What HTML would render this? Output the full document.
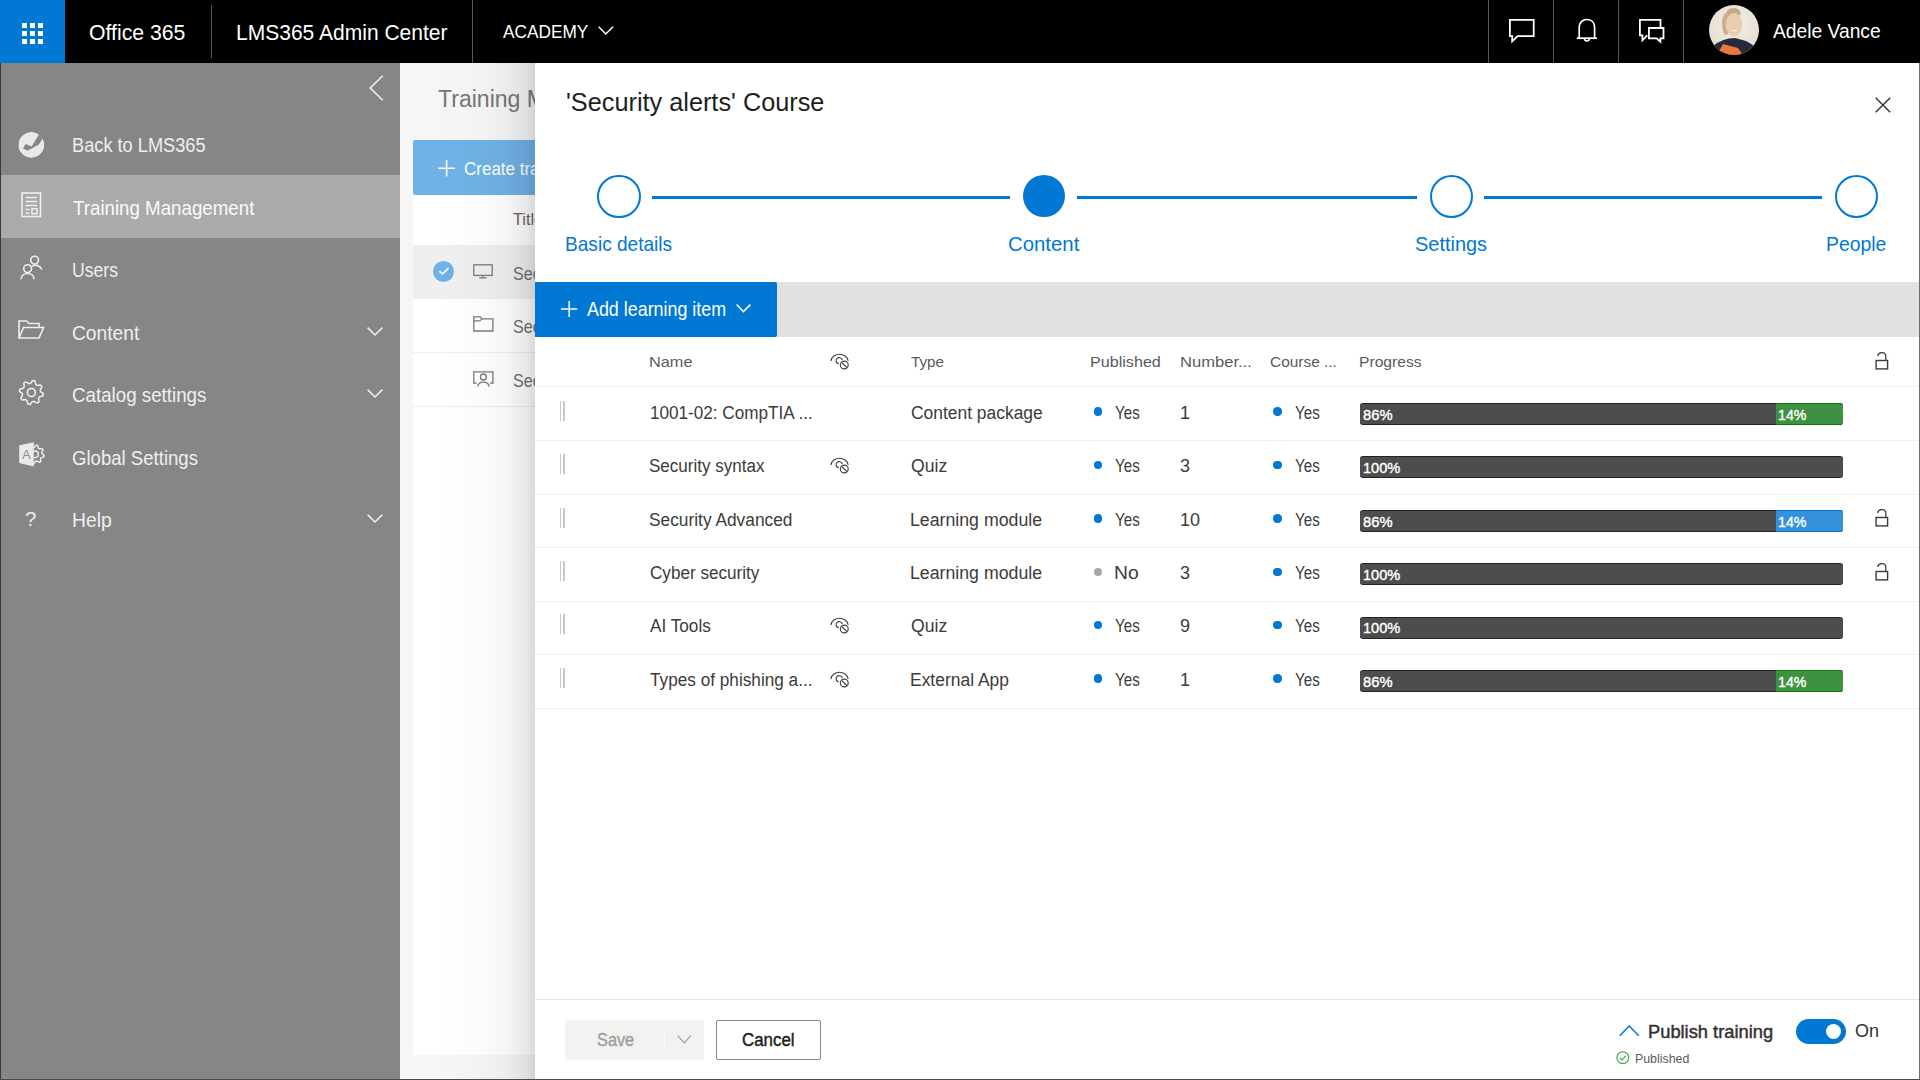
<!DOCTYPE html>
<html><head><meta charset="utf-8"><title>LMS365 Admin Center</title>
<style>
*{box-sizing:border-box;margin:0;padding:0}
html,body{width:1920px;height:1080px;overflow:hidden;background:#fff;font-family:"Liberation Sans",sans-serif}
body{position:relative}
.b{position:absolute}
.t{position:absolute;white-space:nowrap;line-height:40px;height:40px}
svg.b{overflow:visible}
</style></head><body>

<div class="b" style="left:0px;top:0px;width:1920px;height:63px;background:#000"></div>
<div class="b" style="left:0px;top:0px;width:65px;height:63px;background:#0078d4"></div>
<svg class="b" style="left:22px;top:23px" width="21" height="21" viewBox="0 0 21 21"><g fill="#fff"><rect x="0" y="0" width="5" height="5"/><rect x="8" y="0" width="5" height="5"/><rect x="16" y="0" width="5" height="5"/><rect x="0" y="8" width="5" height="5"/><rect x="8" y="8" width="5" height="5"/><rect x="16" y="8" width="5" height="5"/><rect x="0" y="16" width="5" height="5"/><rect x="8" y="16" width="5" height="5"/><rect x="16" y="16" width="5" height="5"/></g></svg>
<div class="t" style="left:89.44px;top:13.00px;font-size:22.17px;letter-spacing:0px;font-weight:400;transform:scaleX(0.9578);transform-origin:0 0;color:#fff;;">Office 365</div>
<div class="b" style="left:211px;top:5px;width:1px;height:53px;background:#555"></div>
<div class="t" style="left:235.78px;top:13.00px;font-size:22.17px;letter-spacing:0px;font-weight:400;transform:scaleX(0.949);transform-origin:0 0;color:#fff;;">LMS365 Admin Center</div>
<div class="b" style="left:472px;top:0px;width:1px;height:63px;background:#555"></div>
<div class="t" style="left:502.81px;top:11.90px;font-size:18.75px;letter-spacing:0px;font-weight:400;transform:scaleX(0.9202);transform-origin:0 0;color:#fff;;">ACADEMY</div>
<svg class="b" style="left:598px;top:26px" width="16" height="9" viewBox="0 0 16 9"><path d="M0.7 0.7 L7.8 8 L15 0.7" stroke="#fff" stroke-width="1.5" fill="none"/></svg>
<div class="b" style="left:1488px;top:0px;width:1px;height:63px;background:#555"></div>
<div class="b" style="left:1553px;top:0px;width:1px;height:63px;background:#555"></div>
<div class="b" style="left:1618px;top:0px;width:1px;height:63px;background:#555"></div>
<div class="b" style="left:1683px;top:0px;width:1px;height:63px;background:#555"></div>
<svg class="b" style="left:1508px;top:18px" width="28" height="26" viewBox="0 0 28 26"><path d="M1.9 1.9 H25.7 V18.1 H9.6 L4.2 23.4 V18.1 H1.9 Z" stroke="#fff" stroke-width="1.8" fill="none" stroke-linejoin="miter"/></svg>
<svg class="b" style="left:1576px;top:18px" width="22" height="26" viewBox="0 0 22 26"><path d="M3.2 19.9 V9.5 C3.2 4.5 6.5 1.5 10.9 1.5 C15.3 1.5 18.6 4.5 18.6 9.5 V19.9" stroke="#fff" stroke-width="1.7" fill="none"/><path d="M0.8 20.2 H21" stroke="#fff" stroke-width="1.8"/><path d="M8.4 20.5 C8.6 23.8 13.2 23.8 13.4 20.5" stroke="#fff" stroke-width="1.5" fill="none"/></svg>
<svg class="b" style="left:1638px;top:18px" width="28" height="26" viewBox="0 0 28 26"><path d="M22.5 9.5 V1.9 H1.9 V17.4 H4.4 V22.3 L9.3 17.4" stroke="#fff" stroke-width="1.8" fill="none"/><path d="M10.9 10 H25.5 V20.3 H22.4 V23.8 L18.6 20.3 H10.9 Z" stroke="#fff" stroke-width="1.8" fill="none"/></svg>
<svg class="b" style="left:1709px;top:5px" width="50" height="50" viewBox="0 0 50 50"><defs><clipPath id="av"><circle cx="25" cy="25" r="25"/></clipPath><radialGradient id="avbg" cx="0.5" cy="0.4" r="0.7"><stop offset="0" stop-color="#f4efe8"/><stop offset="1" stop-color="#e2d9cc"/></radialGradient></defs><g clip-path="url(#av)"><rect width="50" height="50" fill="url(#avbg)"/><ellipse cx="24.5" cy="8" rx="7" ry="5" fill="#c9a983"/><ellipse cx="17" cy="19" rx="4" ry="11" fill="#cdae88"/><ellipse cx="25" cy="19.5" rx="8.3" ry="11.5" fill="#e9cdb2"/><path d="M21 24.5 Q25 28 29 24.5 Q25 26 21 24.5Z" fill="#fff"/><path d="M0 50 L4 41 Q14 33 26 33 L37 36 Q45 40 50 46 V50 Z" fill="#262a3c"/><path d="M8 50 L14 39 L29 43 L34 50 Z" fill="#e9793a"/></g></svg>
<div class="t" style="left:1772.61px;top:10.50px;font-size:19.99px;letter-spacing:0px;font-weight:400;transform:scaleX(0.9628);transform-origin:0 0;color:#fff;;">Adele Vance</div>
<div class="b" style="left:0px;top:63px;width:400px;height:1017px;background:#868686"></div>
<div class="b" style="left:0px;top:63px;width:1px;height:1017px;background:#3a3a3a"></div>
<div class="b" style="left:1px;top:175px;width:399px;height:63px;background:#aaaaaa"></div>
<svg class="b" style="left:368px;top:75px" width="16" height="26" viewBox="0 0 16 26"><path d="M14.8 0.8 L2.2 13 L14.8 25.2" stroke="#efefef" stroke-width="1.6" fill="none"/></svg>
<svg class="b" style="left:18px;top:132px" width="27" height="27" viewBox="0 0 27 27"><defs><clipPath id="cc"><circle cx="13.3" cy="12.9" r="13"/></clipPath></defs><g clip-path="url(#cc)"><circle cx="13.3" cy="12.9" r="13" fill="#e9e9e9"/><path d="M20.9 2.5 L13.6 14.6 L7.5 11.9 L5.1 16.5 L9.5 18.8 L20.9 12.4 L24.3 7 L30 4 L28 -3 L21 -3 Z" fill="#868686"/></g></svg>
<div class="t" style="left:71.97px;top:125.30px;font-size:20.93px;letter-spacing:0px;font-weight:400;transform:scaleX(0.8703);transform-origin:0 0;color:#efefef;;">Back to LMS365</div>
<svg class="b" style="left:21px;top:192px" width="21" height="26" viewBox="0 0 21 26"><rect x="1" y="1" width="18.5" height="23.5" stroke="#efefef" stroke-width="1.6" fill="none"/><path d="M4.5 5.5H16M4.5 9.5H16M4.5 13.5H16M4.5 17.5H8.5M4.5 21H8.5" stroke="#efefef" stroke-width="1.5"/><rect x="11" y="16.7" width="5" height="5" stroke="#efefef" stroke-width="1.5" fill="none"/></svg>
<div class="t" style="left:72.83px;top:187.80px;font-size:20.64px;letter-spacing:0px;font-weight:400;transform:scaleX(0.9074);transform-origin:0 0;color:#fafafa;;">Training Management</div>
<svg class="b" style="left:20px;top:255px" width="23" height="25" viewBox="0 0 23 25"><circle cx="14.6" cy="5.1" r="3.9" stroke="#efefef" stroke-width="1.6" fill="none"/><path d="M12 11.4 C15.5 9.2 20.3 10.5 21.8 14.6" stroke="#efefef" stroke-width="1.6" fill="none"/><circle cx="7.6" cy="13.6" r="3.9" stroke="#efefef" stroke-width="1.6" fill="none"/><path d="M1 24.2 C1.6 16.6 13.6 16.6 14.2 24.2" stroke="#efefef" stroke-width="1.6" fill="none"/></svg>
<div class="t" style="left:72.09px;top:250.30px;font-size:20.64px;letter-spacing:0px;font-weight:400;transform:scaleX(0.8544);transform-origin:0 0;color:#efefef;;">Users</div>
<svg class="b" style="left:18px;top:320px" width="27" height="19" viewBox="0 0 27 19"><path d="M1 18 V1 H8.6 L11 3.5 H21 V7.4 M1 18 L5.5 7.5 H25.6 L21 18 Z" stroke="#efefef" stroke-width="1.6" fill="none" stroke-linejoin="miter"/></svg>
<div class="t" style="left:72.17px;top:312.80px;font-size:20.64px;letter-spacing:0px;font-weight:400;transform:scaleX(0.9313);transform-origin:0 0;color:#efefef;;">Content</div>
<svg class="b" style="left:18px;top:380px" width="27" height="26" viewBox="0 0 27 26"><path d="M14.58 0.56 L16.88 1.02 L17.74 4.39 L19.24 5.39 L22.68 4.89 L23.98 6.84 L22.20 9.83 L22.56 11.60 L25.34 13.68 L24.88 15.98 L21.51 16.84 L20.51 18.34 L21.01 21.78 L19.06 23.08 L16.07 21.30 L14.30 21.66 L12.22 24.44 L9.92 23.98 L9.06 20.61 L7.56 19.61 L4.12 20.11 L2.82 18.16 L4.60 15.17 L4.24 13.40 L1.46 11.32 L1.92 9.02 L5.29 8.16 L6.29 6.66 L5.79 3.22 L7.74 1.92 L10.73 3.70 L12.50 3.34 Z" stroke="#efefef" stroke-width="1.5" fill="none" stroke-linejoin="round"/><circle cx="13.4" cy="12.5" r="4" stroke="#efefef" stroke-width="1.6" fill="none"/></svg>
<div class="t" style="left:71.88px;top:375.30px;font-size:20.64px;letter-spacing:0px;font-weight:400;transform:scaleX(0.9088);transform-origin:0 0;color:#efefef;;">Catalog settings</div>
<svg class="b" style="left:19px;top:442px" width="27" height="26" viewBox="0 0 27 26"><path d="M25.16 13.20 L24.80 14.97 L22.17 15.60 L21.41 16.74 L21.84 19.41 L20.34 20.41 L18.03 19.00 L16.69 19.27 L15.10 21.46 L13.33 21.10 L12.70 18.47 L11.56 17.71 L8.89 18.14 L7.89 16.64 L9.30 14.33 L9.03 12.99 L6.84 11.40 L7.20 9.63 L9.83 9.00 L10.59 7.86 L10.16 5.19 L11.66 4.19 L13.97 5.60 L15.31 5.33 L16.90 3.14 L18.67 3.50 L19.30 6.13 L20.44 6.89 L23.11 6.46 L24.11 7.96 L22.70 10.27 L22.97 11.61 Z" stroke="#efefef" stroke-width="1.4" fill="none" stroke-linejoin="round"/><circle cx="16" cy="12.3" r="3.3" stroke="#efefef" stroke-width="1.4" fill="none"/><path d="M0.2 3.3 L14.8 0.2 V24.6 L0.2 21.1 Z" fill="#e9e9e9"/><text x="3.3" y="16.8" font-family="Liberation Sans" font-size="12.5" fill="#8d8d8d">A</text></svg>
<div class="t" style="left:71.88px;top:437.80px;font-size:20.64px;letter-spacing:0px;font-weight:400;transform:scaleX(0.9006);transform-origin:0 0;color:#efefef;;">Global Settings</div>
<div class="t" style="left:24.91px;top:499.00px;font-size:20.35px;letter-spacing:0px;font-weight:400;transform:scaleX(1.0);transform-origin:0 0;color:#efefef;;">?</div>
<div class="t" style="left:72.14px;top:500.00px;font-size:20.64px;letter-spacing:0px;font-weight:400;transform:scaleX(0.9379);transform-origin:0 0;color:#efefef;;">Help</div>
<svg class="b" style="left:367px;top:327px" width="16" height="9" viewBox="0 0 16 9"><path d="M0.6 0.6 L8 8 L15.4 0.6" stroke="#efefef" stroke-width="1.5" fill="none"/></svg>
<svg class="b" style="left:367px;top:389px" width="16" height="9" viewBox="0 0 16 9"><path d="M0.6 0.6 L8 8 L15.4 0.6" stroke="#efefef" stroke-width="1.5" fill="none"/></svg>
<svg class="b" style="left:367px;top:514px" width="16" height="9" viewBox="0 0 16 9"><path d="M0.6 0.6 L8 8 L15.4 0.6" stroke="#efefef" stroke-width="1.5" fill="none"/></svg>
<div class="b" style="left:400px;top:63px;width:135px;height:1017px;background:#f6f6f6"></div>
<div class="t" style="left:437.76px;top:79.30px;font-size:24.42px;letter-spacing:0px;font-weight:400;transform:scaleX(0.9447);transform-origin:0 0;color:#777777;;">Training Management</div>
<div class="b" style="left:413px;top:140px;width:140px;height:54.7px;background:#70b2e6;border-radius:2px"></div>
<svg class="b" style="left:438px;top:160px" width="18" height="17" viewBox="0 0 18 17"><path d="M8.6 0V16.5M0.3 8.2H17" stroke="#fff" stroke-width="1.5"/></svg>
<div class="t" style="left:464.32px;top:148.70px;font-size:18.46px;letter-spacing:0px;font-weight:400;transform:scaleX(0.9216);transform-origin:0 0;color:#fff;;">Create training</div>
<div class="b" style="left:413px;top:194.7px;width:122px;height:860px;background:#fff"></div>
<div class="t" style="left:512.58px;top:200.10px;font-size:16.72px;letter-spacing:0px;font-weight:400;transform:scaleX(0.97);transform-origin:0 0;color:#666;;">Title</div>
<div class="b" style="left:413px;top:245.3px;width:122px;height:54px;background:#efefef"></div>
<div class="b" style="left:413px;top:352px;width:122px;height:1px;background:#eeeeee"></div>
<div class="b" style="left:413px;top:406px;width:122px;height:1px;background:#eeeeee"></div>
<div class="b" style="left:432.3px;top:260.3px;width:22.4px;height:22.4px;border-radius:50%;background:#70b2e6;border:1.6px solid #fff"></div>
<svg class="b" style="left:438px;top:266px" width="12" height="10" viewBox="0 0 12 10"><path d="M1.3 5.2 L4.4 8 L10.5 2.2" stroke="#fff" stroke-width="1.6" fill="none"/></svg>
<svg class="b" style="left:473px;top:264px" width="20" height="15" viewBox="0 0 20 15"><rect x="0.8" y="0.8" width="18.4" height="10.6" stroke="#7a7a7a" stroke-width="1.3" fill="none"/><path d="M9.9 11.5V13.8M6.2 13.8H13.6" stroke="#7a7a7a" stroke-width="1.3"/></svg>
<svg class="b" style="left:473px;top:316px" width="21" height="16" viewBox="0 0 21 16"><path d="M0.8 15 V0.8 H7.2 L9 2.9 H19.9 V15 Z" stroke="#7a7a7a" stroke-width="1.3" fill="none"/><path d="M0.8 4.9 H6.8 L8.8 2.9" stroke="#7a7a7a" stroke-width="1.2" fill="none"/></svg>
<svg class="b" style="left:473px;top:371px" width="21" height="16" viewBox="0 0 21 16"><path d="M3.6 12 H0.8 V0.8 H19.9 V12 H17.2" stroke="#7a7a7a" stroke-width="1.3" fill="none"/><circle cx="10.4" cy="6" r="3" stroke="#7a7a7a" stroke-width="1.3" fill="none"/><path d="M4.6 15.6 C5.6 9.6 15.2 9.6 16.2 15.6" stroke="#7a7a7a" stroke-width="1.3" fill="none"/></svg>
<div class="t" style="left:513.35px;top:254.00px;font-size:18.17px;letter-spacing:0px;font-weight:400;transform:scaleX(0.89);transform-origin:0 0;color:#6f6f6f;;">Security</div>
<div class="t" style="left:513.35px;top:306.50px;font-size:18.17px;letter-spacing:0px;font-weight:400;transform:scaleX(0.89);transform-origin:0 0;color:#6f6f6f;;">Security</div>
<div class="t" style="left:513.35px;top:361.00px;font-size:18.17px;letter-spacing:0px;font-weight:400;transform:scaleX(0.89);transform-origin:0 0;color:#6f6f6f;;">Security</div>
<div class="b" style="left:440px;top:63px;width:95px;height:1017px;background:linear-gradient(to right,rgba(0,0,0,0) 0%,rgba(0,0,0,0.015) 45%,rgba(0,0,0,0.04) 70%,rgba(0,0,0,0.09) 90%,rgba(0,0,0,0.15) 100%)"></div>
<div class="b" style="left:535px;top:63px;width:1385px;height:1017px;background:#fff"></div>
<div class="t" style="left:565.64px;top:82.40px;font-size:25.44px;letter-spacing:0px;font-weight:400;transform:scaleX(0.9941);transform-origin:0 0;color:#201f1e;;">'Security alerts' Course</div>
<svg class="b" style="left:1875px;top:97px" width="16" height="16" viewBox="0 0 16 16"><path d="M0.7 0.7 L15.2 15.2 M15.2 0.7 L0.7 15.2" stroke="#323130" stroke-width="1.4"/></svg>
<div class="b" style="left:652px;top:196px;width:358px;height:3px;background:#0078d4"></div>
<div class="b" style="left:1077px;top:196px;width:340px;height:3px;background:#0078d4"></div>
<div class="b" style="left:1484px;top:196px;width:338px;height:3px;background:#0078d4"></div>
<div class="b" style="left:597.40px;top:174.60px;width:43.2px;height:43.2px;border-radius:50%;border:2.5px solid #0078d4"></div>
<div class="b" style="left:1429.60px;top:174.60px;width:43.2px;height:43.2px;border-radius:50%;border:2.5px solid #0078d4"></div>
<div class="b" style="left:1835.00px;top:174.60px;width:43.2px;height:43.2px;border-radius:50%;border:2.5px solid #0078d4"></div>
<div class="b" style="left:1023.30px;top:175.40px;width:41.8px;height:41.8px;border-radius:50%;background:#0078d4"></div>
<div class="t" style="left:564.70px;top:223.90px;font-size:20.2px;letter-spacing:0px;font-weight:400;transform:scaleX(0.9454);transform-origin:0 0;color:#0078d4;;">Basic details</div>
<div class="t" style="left:1007.82px;top:223.80px;font-size:20.2px;letter-spacing:0px;font-weight:400;transform:scaleX(1.009);transform-origin:0 0;color:#0078d4;;">Content</div>
<div class="t" style="left:1414.62px;top:223.80px;font-size:20.2px;letter-spacing:0px;font-weight:400;transform:scaleX(0.9881);transform-origin:0 0;color:#0078d4;;">Settings</div>
<div class="t" style="left:1825.89px;top:223.80px;font-size:20.2px;letter-spacing:0px;font-weight:400;transform:scaleX(0.9588);transform-origin:0 0;color:#0078d4;;">People</div>
<div class="b" style="left:535px;top:282px;width:1384px;height:55px;background:#e1e1e1"></div>
<div class="b" style="left:535px;top:282px;width:242px;height:55px;background:#0078d4;border-radius:0 2px 2px 0"></div>
<svg class="b" style="left:561px;top:301px" width="17" height="17" viewBox="0 0 17 17"><path d="M8.2 0V16M0 8.1H16.3" stroke="#fff" stroke-width="1.5"/></svg>
<div class="t" style="left:587.46px;top:289.25px;font-size:19.99px;letter-spacing:0px;font-weight:400;transform:scaleX(0.8946);transform-origin:0 0;color:#fff;;">Add learning item</div>
<svg class="b" style="left:736px;top:304px" width="16" height="9" viewBox="0 0 16 9"><path d="M0.6 0.6 L7.4 7.6 L14.4 0.6" stroke="#fff" stroke-width="1.5" fill="none"/></svg>
<div class="t" style="left:649.41px;top:342.00px;font-size:15.55px;letter-spacing:0px;font-weight:400;transform:scaleX(1.0486);transform-origin:0 0;color:#5a5a5a;;">Name</div>
<div class="t" style="left:911.31px;top:342.00px;font-size:15.55px;letter-spacing:0px;font-weight:400;transform:scaleX(0.9781);transform-origin:0 0;color:#5a5a5a;;">Type</div>
<div class="t" style="left:1089.87px;top:342.00px;font-size:15.55px;letter-spacing:0px;font-weight:400;transform:scaleX(1.0372);transform-origin:0 0;color:#5a5a5a;;">Published</div>
<div class="t" style="left:1179.83px;top:342.00px;font-size:15.55px;letter-spacing:0px;font-weight:400;transform:scaleX(1.0653);transform-origin:0 0;color:#5a5a5a;;">Number...</div>
<div class="t" style="left:1269.82px;top:342.00px;font-size:15.55px;letter-spacing:0px;font-weight:400;transform:scaleX(0.9922);transform-origin:0 0;color:#5a5a5a;;">Course ...</div>
<div class="t" style="left:1359.35px;top:342.00px;font-size:15.55px;letter-spacing:0px;font-weight:400;transform:scaleX(1.0063);transform-origin:0 0;color:#5a5a5a;;">Progress</div>
<svg class="b" style="left:829.5px;top:353px" width="20" height="18" viewBox="0 0 20 18"><path d="M1 7.6 A8.6 7.4 0 0 1 18 7.5" stroke="#444" stroke-width="1.2" fill="none" stroke-linecap="round"/><path d="M12.1 6.6 A3.1 3.1 0 1 0 8.2 10.7" stroke="#444" stroke-width="1.2" fill="none" stroke-linecap="round"/><circle cx="14.3" cy="12" r="3.9" stroke="#444" stroke-width="1.2" fill="#fff"/><path d="M12 9.6 L16.8 14.5" stroke="#444" stroke-width="1.2"/></svg>
<svg class="b" style="left:1874.6px;top:351.2px" width="14" height="19" viewBox="0 0 14 19"><path d="M2.6 4.8 C3.4 0.9 10.2 0.3 10.8 4.6 V9.5" stroke="#3a3a3a" stroke-width="1.25" fill="none"/><rect x="1.1" y="9.5" width="11.5" height="8.4" stroke="#3a3a3a" stroke-width="1.4" fill="none"/></svg>
<div class="b" style="left:535px;top:386px;width:1384px;height:1px;background:#f0f0f0"></div>
<div class="b" style="left:535px;top:440px;width:1384px;height:1px;background:#f0f0f0"></div>
<div class="b" style="left:535px;top:494px;width:1384px;height:1px;background:#f0f0f0"></div>
<div class="b" style="left:535px;top:547px;width:1384px;height:1px;background:#f0f0f0"></div>
<div class="b" style="left:535px;top:601px;width:1384px;height:1px;background:#f0f0f0"></div>
<div class="b" style="left:535px;top:654px;width:1384px;height:1px;background:#f0f0f0"></div>
<div class="b" style="left:535px;top:708px;width:1384px;height:1px;background:#f0f0f0"></div>
<div class="b" style="left:559.8px;top:400.8px;width:1.5px;height:20px;background:#c8c8c8"></div>
<div class="b" style="left:563.3px;top:400.8px;width:1.5px;height:20px;background:#c8c8c8"></div>
<div class="t" style="left:649.54px;top:393.10px;font-size:19.19px;letter-spacing:0px;font-weight:400;transform:scaleX(0.8926);transform-origin:0 0;color:#3c3b3a;;">1001-02: CompTIA ...</div>
<div class="t" style="left:910.62px;top:393.10px;font-size:19.19px;letter-spacing:0px;font-weight:400;transform:scaleX(0.9077);transform-origin:0 0;color:#3c3b3a;;">Content package</div>
<div class="b" style="left:1093.8px;top:407.40px;width:8.4px;height:8.4px;border-radius:50%;background:#0078d4"></div>
<div class="t" style="left:1115.47px;top:393.10px;font-size:19.19px;letter-spacing:0px;font-weight:400;transform:scaleX(0.789);transform-origin:0 0;color:#3c3b3a;;">Yes</div>
<div class="t" style="left:1180.40px;top:393.10px;font-size:19.19px;letter-spacing:0px;font-weight:400;transform:scaleX(0.9393);transform-origin:0 0;color:#3c3b3a;;letter-spacing:0">1</div>
<div class="b" style="left:1273.3px;top:407.40px;width:8.4px;height:8.4px;border-radius:50%;background:#0078d4"></div>
<div class="t" style="left:1294.97px;top:393.10px;font-size:19.19px;letter-spacing:0px;font-weight:400;transform:scaleX(0.789);transform-origin:0 0;color:#3c3b3a;;">Yes</div>
<div class="b" style="left:1360px;top:403.0px;width:483px;height:22px;border-radius:3px;overflow:hidden;background:#222"><div class="b" style="left:0;top:1px;width:483px;height:20px;background:#4d4d4d"></div><div class="b" style="left:415.8px;top:0;width:67.2px;height:22px;background:#0c7a0c"><div class="b" style="left:0;top:1px;width:67.2px;height:20px;background:#3d9140"></div></div></div>
<div class="t" style="left:1362.79px;top:394.80px;font-size:15.41px;letter-spacing:0px;font-weight:400;transform:scaleX(0.9562);transform-origin:0 0;color:#fff;-webkit-text-stroke:0.4px currentColor;">86%</div>
<div class="t" style="left:1778.49px;top:394.80px;font-size:15.41px;letter-spacing:0px;font-weight:400;transform:scaleX(0.9211);transform-origin:0 0;color:#fff;-webkit-text-stroke:0.4px currentColor;">14%</div>
<div class="b" style="left:559.8px;top:454.2px;width:1.5px;height:20px;background:#c8c8c8"></div>
<div class="b" style="left:563.3px;top:454.2px;width:1.5px;height:20px;background:#c8c8c8"></div>
<div class="t" style="left:649.44px;top:446.44px;font-size:19.19px;letter-spacing:0px;font-weight:400;transform:scaleX(0.8872);transform-origin:0 0;color:#3c3b3a;;">Security syntax</div>
<svg class="b" style="left:829.5px;top:456.9px" width="20" height="18" viewBox="0 0 20 18"><path d="M1 7.6 A8.6 7.4 0 0 1 18 7.5" stroke="#444" stroke-width="1.2" fill="none" stroke-linecap="round"/><path d="M12.1 6.6 A3.1 3.1 0 1 0 8.2 10.7" stroke="#444" stroke-width="1.2" fill="none" stroke-linecap="round"/><circle cx="14.3" cy="12" r="3.9" stroke="#444" stroke-width="1.2" fill="#fff"/><path d="M12 9.6 L16.8 14.5" stroke="#444" stroke-width="1.2"/></svg>
<div class="t" style="left:910.63px;top:446.44px;font-size:19.19px;letter-spacing:0px;font-weight:400;transform:scaleX(0.9173);transform-origin:0 0;color:#3c3b3a;;">Quiz</div>
<div class="b" style="left:1093.8px;top:460.80px;width:8.4px;height:8.4px;border-radius:50%;background:#0078d4"></div>
<div class="t" style="left:1115.47px;top:446.44px;font-size:19.19px;letter-spacing:0px;font-weight:400;transform:scaleX(0.789);transform-origin:0 0;color:#3c3b3a;;">Yes</div>
<div class="t" style="left:1180.00px;top:446.44px;font-size:19.19px;letter-spacing:0px;font-weight:400;transform:scaleX(0.9393);transform-origin:0 0;color:#3c3b3a;;letter-spacing:0">3</div>
<div class="b" style="left:1273.3px;top:460.80px;width:8.4px;height:8.4px;border-radius:50%;background:#0078d4"></div>
<div class="t" style="left:1294.97px;top:446.44px;font-size:19.19px;letter-spacing:0px;font-weight:400;transform:scaleX(0.789);transform-origin:0 0;color:#3c3b3a;;">Yes</div>
<div class="b" style="left:1360px;top:456.4px;width:483px;height:22px;border-radius:3px;overflow:hidden;background:#222"><div class="b" style="left:0;top:1px;width:483px;height:20px;background:#4d4d4d"></div></div>
<div class="t" style="left:1363.08px;top:448.20px;font-size:15.41px;letter-spacing:0px;font-weight:400;transform:scaleX(0.948);transform-origin:0 0;color:#fff;-webkit-text-stroke:0.4px currentColor;">100%</div>
<div class="b" style="left:559.8px;top:507.6px;width:1.5px;height:20px;background:#c8c8c8"></div>
<div class="b" style="left:563.3px;top:507.6px;width:1.5px;height:20px;background:#c8c8c8"></div>
<div class="t" style="left:649.44px;top:499.78px;font-size:19.19px;letter-spacing:0px;font-weight:400;transform:scaleX(0.9028);transform-origin:0 0;color:#3c3b3a;;">Security Advanced</div>
<div class="t" style="left:910.10px;top:499.78px;font-size:19.19px;letter-spacing:0px;font-weight:400;transform:scaleX(0.9237);transform-origin:0 0;color:#3c3b3a;;">Learning module</div>
<div class="b" style="left:1093.8px;top:514.20px;width:8.4px;height:8.4px;border-radius:50%;background:#0078d4"></div>
<div class="t" style="left:1115.47px;top:499.78px;font-size:19.19px;letter-spacing:0px;font-weight:400;transform:scaleX(0.789);transform-origin:0 0;color:#3c3b3a;;">Yes</div>
<div class="t" style="left:1179.68px;top:499.78px;font-size:19.19px;letter-spacing:0px;font-weight:400;transform:scaleX(0.9393);transform-origin:0 0;color:#3c3b3a;;">10</div>
<div class="b" style="left:1273.3px;top:514.20px;width:8.4px;height:8.4px;border-radius:50%;background:#0078d4"></div>
<div class="t" style="left:1294.97px;top:499.78px;font-size:19.19px;letter-spacing:0px;font-weight:400;transform:scaleX(0.789);transform-origin:0 0;color:#3c3b3a;;">Yes</div>
<div class="b" style="left:1360px;top:509.8px;width:483px;height:22px;border-radius:3px;overflow:hidden;background:#222"><div class="b" style="left:0;top:1px;width:483px;height:20px;background:#4d4d4d"></div><div class="b" style="left:415.8px;top:0;width:67.2px;height:22px;background:#0078d4"><div class="b" style="left:0;top:1px;width:67.2px;height:20px;background:#3591db"></div></div></div>
<div class="t" style="left:1362.79px;top:501.60px;font-size:15.41px;letter-spacing:0px;font-weight:400;transform:scaleX(0.9562);transform-origin:0 0;color:#fff;-webkit-text-stroke:0.4px currentColor;">86%</div>
<div class="t" style="left:1778.49px;top:501.60px;font-size:15.41px;letter-spacing:0px;font-weight:400;transform:scaleX(0.9211);transform-origin:0 0;color:#fff;-webkit-text-stroke:0.4px currentColor;">14%</div>
<svg class="b" style="left:1874.6px;top:508.2px" width="14" height="19" viewBox="0 0 14 19"><path d="M2.6 4.8 C3.4 0.9 10.2 0.3 10.8 4.6 V9.5" stroke="#3a3a3a" stroke-width="1.25" fill="none"/><rect x="1.1" y="9.5" width="11.5" height="8.4" stroke="#3a3a3a" stroke-width="1.4" fill="none"/></svg>
<div class="b" style="left:559.8px;top:561.0px;width:1.5px;height:20px;background:#c8c8c8"></div>
<div class="b" style="left:563.3px;top:561.0px;width:1.5px;height:20px;background:#c8c8c8"></div>
<div class="t" style="left:649.52px;top:553.12px;font-size:19.19px;letter-spacing:0px;font-weight:400;transform:scaleX(0.8924);transform-origin:0 0;color:#3c3b3a;;">Cyber security</div>
<div class="t" style="left:910.10px;top:553.12px;font-size:19.19px;letter-spacing:0px;font-weight:400;transform:scaleX(0.9237);transform-origin:0 0;color:#3c3b3a;;">Learning module</div>
<div class="b" style="left:1093.8px;top:567.60px;width:8.4px;height:8.4px;border-radius:50%;background:#a6a6a6"></div>
<div class="t" style="left:1114.49px;top:553.12px;font-size:19.19px;letter-spacing:0px;font-weight:400;transform:scaleX(1.0049);transform-origin:0 0;color:#3c3b3a;;">No</div>
<div class="t" style="left:1180.00px;top:553.12px;font-size:19.19px;letter-spacing:0px;font-weight:400;transform:scaleX(0.9393);transform-origin:0 0;color:#3c3b3a;;letter-spacing:0">3</div>
<div class="b" style="left:1273.3px;top:567.60px;width:8.4px;height:8.4px;border-radius:50%;background:#0078d4"></div>
<div class="t" style="left:1294.97px;top:553.12px;font-size:19.19px;letter-spacing:0px;font-weight:400;transform:scaleX(0.789);transform-origin:0 0;color:#3c3b3a;;">Yes</div>
<div class="b" style="left:1360px;top:563.2px;width:483px;height:22px;border-radius:3px;overflow:hidden;background:#222"><div class="b" style="left:0;top:1px;width:483px;height:20px;background:#4d4d4d"></div></div>
<div class="t" style="left:1363.08px;top:555.00px;font-size:15.41px;letter-spacing:0px;font-weight:400;transform:scaleX(0.948);transform-origin:0 0;color:#fff;-webkit-text-stroke:0.4px currentColor;">100%</div>
<svg class="b" style="left:1874.6px;top:561.6px" width="14" height="19" viewBox="0 0 14 19"><path d="M2.6 4.8 C3.4 0.9 10.2 0.3 10.8 4.6 V9.5" stroke="#3a3a3a" stroke-width="1.25" fill="none"/><rect x="1.1" y="9.5" width="11.5" height="8.4" stroke="#3a3a3a" stroke-width="1.4" fill="none"/></svg>
<div class="b" style="left:559.8px;top:614.4px;width:1.5px;height:20px;background:#c8c8c8"></div>
<div class="b" style="left:563.3px;top:614.4px;width:1.5px;height:20px;background:#c8c8c8"></div>
<div class="t" style="left:650.31px;top:606.46px;font-size:19.19px;letter-spacing:0px;font-weight:400;transform:scaleX(0.8951);transform-origin:0 0;color:#3c3b3a;;">AI Tools</div>
<svg class="b" style="left:829.5px;top:617.1px" width="20" height="18" viewBox="0 0 20 18"><path d="M1 7.6 A8.6 7.4 0 0 1 18 7.5" stroke="#444" stroke-width="1.2" fill="none" stroke-linecap="round"/><path d="M12.1 6.6 A3.1 3.1 0 1 0 8.2 10.7" stroke="#444" stroke-width="1.2" fill="none" stroke-linecap="round"/><circle cx="14.3" cy="12" r="3.9" stroke="#444" stroke-width="1.2" fill="#fff"/><path d="M12 9.6 L16.8 14.5" stroke="#444" stroke-width="1.2"/></svg>
<div class="t" style="left:910.63px;top:606.46px;font-size:19.19px;letter-spacing:0px;font-weight:400;transform:scaleX(0.9173);transform-origin:0 0;color:#3c3b3a;;">Quiz</div>
<div class="b" style="left:1093.8px;top:621.00px;width:8.4px;height:8.4px;border-radius:50%;background:#0078d4"></div>
<div class="t" style="left:1115.47px;top:606.46px;font-size:19.19px;letter-spacing:0px;font-weight:400;transform:scaleX(0.789);transform-origin:0 0;color:#3c3b3a;;">Yes</div>
<div class="t" style="left:1180.20px;top:606.46px;font-size:19.19px;letter-spacing:0px;font-weight:400;transform:scaleX(0.9393);transform-origin:0 0;color:#3c3b3a;;letter-spacing:0">9</div>
<div class="b" style="left:1273.3px;top:621.00px;width:8.4px;height:8.4px;border-radius:50%;background:#0078d4"></div>
<div class="t" style="left:1294.97px;top:606.46px;font-size:19.19px;letter-spacing:0px;font-weight:400;transform:scaleX(0.789);transform-origin:0 0;color:#3c3b3a;;">Yes</div>
<div class="b" style="left:1360px;top:616.6px;width:483px;height:22px;border-radius:3px;overflow:hidden;background:#222"><div class="b" style="left:0;top:1px;width:483px;height:20px;background:#4d4d4d"></div></div>
<div class="t" style="left:1363.08px;top:608.40px;font-size:15.41px;letter-spacing:0px;font-weight:400;transform:scaleX(0.948);transform-origin:0 0;color:#fff;-webkit-text-stroke:0.4px currentColor;">100%</div>
<div class="b" style="left:559.8px;top:667.8px;width:1.5px;height:20px;background:#c8c8c8"></div>
<div class="b" style="left:563.3px;top:667.8px;width:1.5px;height:20px;background:#c8c8c8"></div>
<div class="t" style="left:650.16px;top:659.80px;font-size:19.19px;letter-spacing:0px;font-weight:400;transform:scaleX(0.8962);transform-origin:0 0;color:#3c3b3a;;">Types of phishing a...</div>
<svg class="b" style="left:829.5px;top:670.5px" width="20" height="18" viewBox="0 0 20 18"><path d="M1 7.6 A8.6 7.4 0 0 1 18 7.5" stroke="#444" stroke-width="1.2" fill="none" stroke-linecap="round"/><path d="M12.1 6.6 A3.1 3.1 0 1 0 8.2 10.7" stroke="#444" stroke-width="1.2" fill="none" stroke-linecap="round"/><circle cx="14.3" cy="12" r="3.9" stroke="#444" stroke-width="1.2" fill="#fff"/><path d="M12 9.6 L16.8 14.5" stroke="#444" stroke-width="1.2"/></svg>
<div class="t" style="left:910.13px;top:659.80px;font-size:19.19px;letter-spacing:0px;font-weight:400;transform:scaleX(0.9094);transform-origin:0 0;color:#3c3b3a;;">External App</div>
<div class="b" style="left:1093.8px;top:674.40px;width:8.4px;height:8.4px;border-radius:50%;background:#0078d4"></div>
<div class="t" style="left:1115.47px;top:659.80px;font-size:19.19px;letter-spacing:0px;font-weight:400;transform:scaleX(0.789);transform-origin:0 0;color:#3c3b3a;;">Yes</div>
<div class="t" style="left:1180.40px;top:659.80px;font-size:19.19px;letter-spacing:0px;font-weight:400;transform:scaleX(0.9393);transform-origin:0 0;color:#3c3b3a;;letter-spacing:0">1</div>
<div class="b" style="left:1273.3px;top:674.40px;width:8.4px;height:8.4px;border-radius:50%;background:#0078d4"></div>
<div class="t" style="left:1294.97px;top:659.80px;font-size:19.19px;letter-spacing:0px;font-weight:400;transform:scaleX(0.789);transform-origin:0 0;color:#3c3b3a;;">Yes</div>
<div class="b" style="left:1360px;top:670.0px;width:483px;height:22px;border-radius:3px;overflow:hidden;background:#222"><div class="b" style="left:0;top:1px;width:483px;height:20px;background:#4d4d4d"></div><div class="b" style="left:415.8px;top:0;width:67.2px;height:22px;background:#0c7a0c"><div class="b" style="left:0;top:1px;width:67.2px;height:20px;background:#3d9140"></div></div></div>
<div class="t" style="left:1362.79px;top:661.80px;font-size:15.41px;letter-spacing:0px;font-weight:400;transform:scaleX(0.9562);transform-origin:0 0;color:#fff;-webkit-text-stroke:0.4px currentColor;">86%</div>
<div class="t" style="left:1778.49px;top:661.80px;font-size:15.41px;letter-spacing:0px;font-weight:400;transform:scaleX(0.9211);transform-origin:0 0;color:#fff;-webkit-text-stroke:0.4px currentColor;">14%</div>
<div class="b" style="left:535px;top:999px;width:1384px;height:1px;background:#e6e6e6"></div>
<div class="b" style="left:565px;top:1020.2px;width:139px;height:39.4px;background:#f3f2f1;border-radius:2px"></div>
<div class="t" style="left:596.57px;top:1019.50px;font-size:17.73px;letter-spacing:0px;font-weight:400;transform:scaleX(0.921);transform-origin:0 0;color:#a19f9d;-webkit-text-stroke:0.45px currentColor;">Save</div>
<div class="b" style="left:664px;top:1030px;width:1px;height:20px;background:#fafafa"></div>
<svg class="b" style="left:676.5px;top:1035.3px" width="15" height="9" viewBox="0 0 15 9"><path d="M0.6 0.6 L7.2 7.8 L14 0.6" stroke="#a19f9d" stroke-width="1.2" fill="none"/></svg>
<div class="b" style="left:716px;top:1020.2px;width:105px;height:39.4px;border:1px solid #8a8886;border-radius:2px;background:#fff"></div>
<div class="t" style="left:742.44px;top:1019.50px;font-size:18.9px;letter-spacing:0px;font-weight:400;transform:scaleX(0.894);transform-origin:0 0;color:#201f1e;-webkit-text-stroke:0.45px currentColor;">Cancel</div>
<svg class="b" style="left:1618.5px;top:1025px" width="21" height="12" viewBox="0 0 21 12"><path d="M0.7 10.8 L10.2 1 L19.8 10.8" stroke="#0078d4" stroke-width="1.5" fill="none"/></svg>
<div class="t" style="left:1648.39px;top:1011.90px;font-size:18.6px;letter-spacing:0px;font-weight:400;transform:scaleX(0.9839);transform-origin:0 0;color:#323130;-webkit-text-stroke:0.45px currentColor;">Publish training</div>
<div class="b" style="left:1796px;top:1019px;width:50px;height:25px;border-radius:12.5px;background:#0078d4"></div>
<div class="b" style="left:1825.8px;top:1023.6px;width:15.6px;height:15.6px;border-radius:50%;background:#fff"></div>
<div class="t" style="left:1855.17px;top:1010.90px;font-size:18.17px;letter-spacing:0px;font-weight:400;transform:scaleX(0.9904);transform-origin:0 0;color:#323130;;">On</div>
<svg class="b" style="left:1616px;top:1051px" width="14" height="14" viewBox="0 0 14 14"><circle cx="6.8" cy="6.6" r="5.9" stroke="#2f9e3f" stroke-width="1.1" fill="none"/><path d="M3.8 6.8 L6 9 L9.9 4.6" stroke="#2f9e3f" stroke-width="1.1" fill="none"/></svg>
<div class="t" style="left:1634.75px;top:1038.80px;font-size:13.08px;letter-spacing:0px;font-weight:400;transform:scaleX(0.9455);transform-origin:0 0;color:#5a5a5a;;">Published</div>
<div class="b" style="left:1919px;top:63px;width:1px;height:1017px;background:#6e6e6e"></div>
<div class="b" style="left:0px;top:1079px;width:1920px;height:1px;background:#4a4a4a"></div>
</body></html>
